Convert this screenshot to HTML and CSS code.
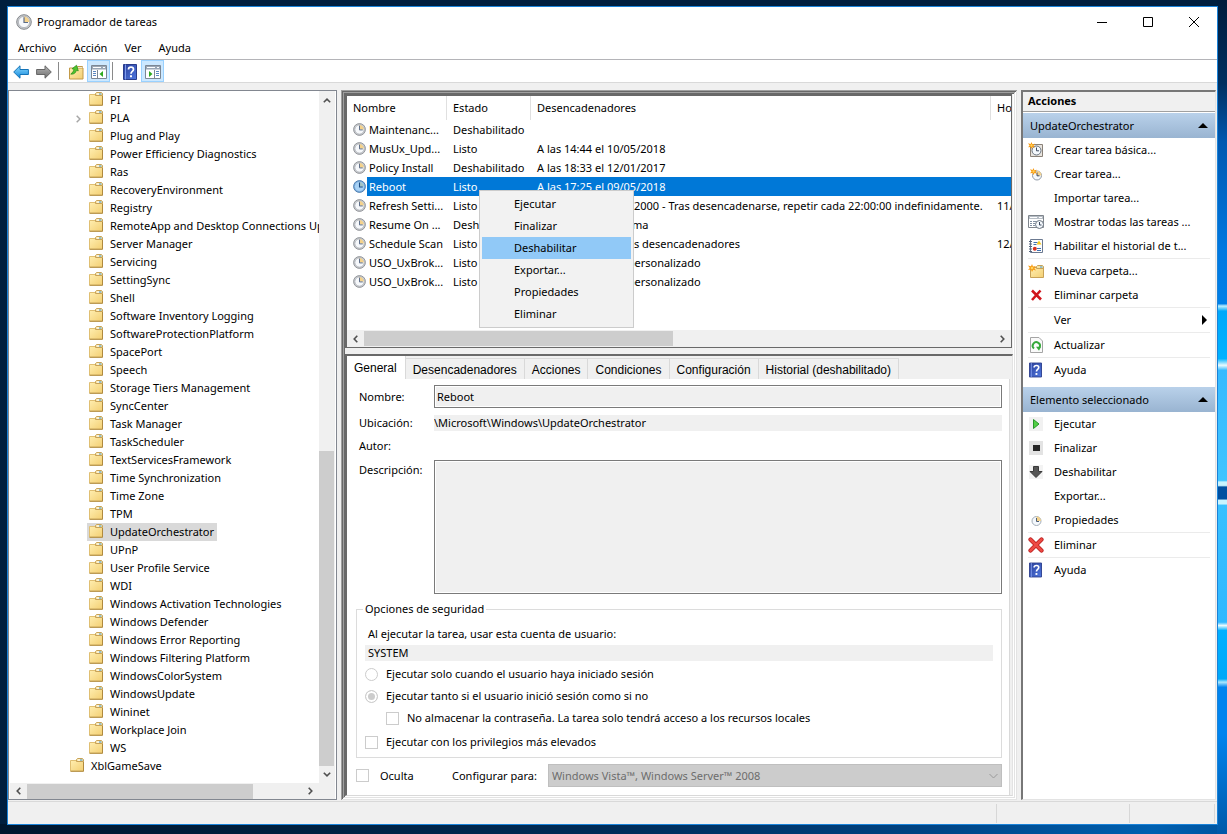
FILE: index.html
```html
<!DOCTYPE html>
<html lang="es">
<head>
<meta charset="utf-8">
<title>Programador de tareas</title>
<link rel="stylesheet" href="styles.css">
</head>
<body>
<svg class="defs" aria-hidden="true">
  <defs>
    <linearGradient id="gold" x1="0" y1="0" x2="1" y2="1"><stop offset="0" stop-color="#ffeeb0"/><stop offset="1" stop-color="#f3cf73"/></linearGradient>
    <linearGradient id="blue" x1="0" y1="0" x2="0" y2="1"><stop offset="0" stop-color="#8fdcff"/><stop offset="1" stop-color="#0f86dc"/></linearGradient>
    <linearGradient id="grey" x1="0" y1="0" x2="0" y2="1"><stop offset="0" stop-color="#b5b5b5"/><stop offset="1" stop-color="#6e6e6e"/></linearGradient>
    <linearGradient id="navy" x1="0" y1="0" x2="1" y2="1"><stop offset="0" stop-color="#2a3f9a"/><stop offset="1" stop-color="#4f78e0"/></linearGradient>
    <symbol id="folder" viewBox="0 0 14 14"><path d="M.5 2.500h13v10.500H.5z" fill="url(#gold)" stroke="#e0bf72"/><path d="M6.500 3.500v-2l1-1h5l1 1v2z" fill="#f6e3a6" stroke="#c8a257"/><path d="M8 2h2" stroke="#fff"/><path d="M10 2h2.500" stroke="#3f9be0"/><path d="M.5 13.300h13V4" fill="none" stroke="#b08a3e"/></symbol>
    <symbol id="clock" viewBox="0 0 16 16"><circle cx="8" cy="8" r="7.300" fill="#c9ccd0" stroke="#85888c"/><circle cx="8" cy="8" r="5.600" fill="#f6f8fb" stroke="#9a9ea4" stroke-width=".6"/><path d="M8 8V2.600A5.400 5.400 0 0 1 13.400 8z" fill="#f4d28c"/><path d="M8 3.200V8.500h4" fill="none" stroke="#5b6c88" stroke-width="1.200"/></symbol>
    <symbol id="clock-sel" viewBox="0 0 16 16"><circle cx="8" cy="8" r="7.300" fill="#7fb0de" stroke="#3b6ea5"/><circle cx="8" cy="8" r="5.600" fill="#a9d2f5"/><path d="M8 8V2.600A5.400 5.400 0 0 1 13.400 8z" fill="#a5c4c4"/><path d="M8 3.200V8.500h4" fill="none" stroke="#1c4a80" stroke-width="1.300"/></symbol>
    <symbol id="star" viewBox="0 0 8 8"><path d="M4 0l1 2.500L8 2 6.300 4 8 6.500 5.200 5.800 4 8 3 5.600 0 6l1.800-2L0 1.500l3 .8z" fill="#f79a12"/><circle cx="4" cy="4" r="1.300" fill="#ffd45c"/></symbol>
    <symbol id="help" viewBox="0 0 14 16"><path d="M.5.500h13v15H.5z" fill="url(#navy)" stroke="#2a3d8c"/><path d="M2.500.500v15" stroke="#7f9bec"/><path d="M5.500 5.400c0-3 5-3 5 0 0 2-2.500 2-2.500 4.300" fill="none" stroke="#fff" stroke-width="1.700"/><path d="M7 11.300h2v2H7z" fill="#fff"/></symbol>
    <symbol id="pane" viewBox="0 0 16 14"><path d="M.5.500h15v13H.5z" fill="#fff" stroke="#7c8794"/><path d="M1 1h14v3.500H1z" fill="#9aa7b6"/><path d="M2 2.500h8M12 2.500h2" stroke="#fff"/></symbol>
    <symbol id="up" viewBox="0 0 8 5"><path d="M.8 4.300L4 1.200l3.200 3.100" fill="none" stroke="#505050" stroke-width="1.600"/></symbol>
    <symbol id="down" viewBox="0 0 8 5"><path d="M.8.700L4 3.800 7.200.700" fill="none" stroke="#505050" stroke-width="1.600"/></symbol>
    <symbol id="left" viewBox="0 0 5 8"><path d="M4.300.800L1.200 4l3.100 3.200" fill="none" stroke="#505050" stroke-width="1.600"/></symbol>
    <symbol id="right" viewBox="0 0 5 8"><path d="M.7.800L3.800 4 .7 7.200" fill="none" stroke="#505050" stroke-width="1.600"/></symbol>
  </defs>
</svg>

<div class="window">
  <header class="titlebar">
    <svg class="app-icon"><use href="#clock"/></svg>
    <h1>Programador de tareas</h1>
    <div class="window-buttons">
      <button aria-label="Minimizar"><svg width="12" height="12" viewBox="0 0 12 12"><path d="M1 6.500h10" stroke="#000"/></svg></button>
      <button aria-label="Maximizar"><svg width="12" height="12" viewBox="0 0 12 12"><path d="M1.500 1.500h9v9h-9z" fill="none" stroke="#000"/></svg></button>
      <button aria-label="Cerrar"><svg width="12" height="12" viewBox="0 0 12 12"><path d="M1 1l10 10M11 1L1 11" stroke="#000"/></svg></button>
    </div>
  </header>
  <nav class="menubar">
    <button>Archivo</button><button>Acción</button><button>Ver</button><button>Ayuda</button>
  </nav>
  <div class="toolbar">
    <button aria-label="Atrás"><svg width="16" height="14" viewBox="0 0 16 14"><path d="M.7 7L7 .8v3.700h8.400v5H7v3.700z" fill="url(#blue)" stroke="#1474b8"/></svg></button>
    <button aria-label="Adelante"><svg width="16" height="14" viewBox="0 0 16 14"><path d="M15.300 7L9 .8v3.700H.6v5H9v3.700z" fill="url(#grey)" stroke="#666"/></svg></button>
    <i class="divider"></i>
    <button aria-label="Subir"><svg width="16" height="16" viewBox="0 0 16 16"><path d="M1.500 4h13.500v11H1.500z" fill="url(#gold)" stroke="#c39a48"/><path d="M9.500 3.500v-1h5v1" fill="#fff" stroke="#c39a48"/><path d="M3 11.500c3.500-.5 4.500-2.500 4.500-5h2L6.500 1.500 3 6h2c0 2-.5 3.500-2 5.500z" transform="translate(1 -.5) rotate(14 6 6)" fill="#4fc42e" stroke="#2c8f1c" stroke-width=".7"/></svg></button>
    <button class="on" aria-label="Mostrar árbol"><svg width="16" height="14"><use href="#pane"/><path d="M6.500 5v8.500" stroke="#7c8794"/><path d="M2 6.500h3M2 8.500h3M2 10.500h3" stroke="#5b88c0"/><path d="M12 6v6L8.500 9z" fill="#2eaa1e"/></svg></button>
    <i class="divider short"></i>
    <button aria-label="Ayuda"><svg width="14" height="16"><use href="#help"/></svg></button>
    <button class="on" aria-label="Mostrar acciones"><svg width="16" height="14"><use href="#pane"/><path d="M9.500 5v8.500" stroke="#7c8794"/><path d="M11 6.500h3M11 8.500h3M11 10.500h3" stroke="#5b88c0"/><path d="M4 6v6l3.500-3z" fill="#2eaa1e"/></svg></button>
  </div>

  <main class="panes">
    <section class="tree-pane">
      <ul class="tree">
        <li><svg><use href="#folder"/></svg><span>PI</span></li>
        <li class="parent"><svg><use href="#folder"/></svg><span>PLA</span><svg class="twisty" viewBox="0 0 5 8"><path d="M.7.700L4 4 .7 7.300" fill="none" stroke="#a6a6a6" stroke-width="1.500"/></svg></li>
        <li><svg><use href="#folder"/></svg><span>Plug and Play</span></li>
        <li><svg><use href="#folder"/></svg><span>Power Efficiency Diagnostics</span></li>
        <li><svg><use href="#folder"/></svg><span>Ras</span></li>
        <li><svg><use href="#folder"/></svg><span>RecoveryEnvironment</span></li>
        <li><svg><use href="#folder"/></svg><span>Registry</span></li>
        <li><svg><use href="#folder"/></svg><span>RemoteApp and Desktop Connections Update</span></li>
        <li><svg><use href="#folder"/></svg><span>Server Manager</span></li>
        <li><svg><use href="#folder"/></svg><span>Servicing</span></li>
        <li><svg><use href="#folder"/></svg><span>SettingSync</span></li>
        <li><svg><use href="#folder"/></svg><span>Shell</span></li>
        <li><svg><use href="#folder"/></svg><span>Software Inventory Logging</span></li>
        <li><svg><use href="#folder"/></svg><span>SoftwareProtectionPlatform</span></li>
        <li><svg><use href="#folder"/></svg><span>SpacePort</span></li>
        <li><svg><use href="#folder"/></svg><span>Speech</span></li>
        <li><svg><use href="#folder"/></svg><span>Storage Tiers Management</span></li>
        <li><svg><use href="#folder"/></svg><span>SyncCenter</span></li>
        <li><svg><use href="#folder"/></svg><span>Task Manager</span></li>
        <li><svg><use href="#folder"/></svg><span>TaskScheduler</span></li>
        <li><svg><use href="#folder"/></svg><span>TextServicesFramework</span></li>
        <li><svg><use href="#folder"/></svg><span>Time Synchronization</span></li>
        <li><svg><use href="#folder"/></svg><span>Time Zone</span></li>
        <li><svg><use href="#folder"/></svg><span>TPM</span></li>
        <li class="current"><svg><use href="#folder"/></svg><span>UpdateOrchestrator</span></li>
        <li><svg><use href="#folder"/></svg><span>UPnP</span></li>
        <li><svg><use href="#folder"/></svg><span>User Profile Service</span></li>
        <li><svg><use href="#folder"/></svg><span>WDI</span></li>
        <li><svg><use href="#folder"/></svg><span>Windows Activation Technologies</span></li>
        <li><svg><use href="#folder"/></svg><span>Windows Defender</span></li>
        <li><svg><use href="#folder"/></svg><span>Windows Error Reporting</span></li>
        <li><svg><use href="#folder"/></svg><span>Windows Filtering Platform</span></li>
        <li><svg><use href="#folder"/></svg><span>WindowsColorSystem</span></li>
        <li><svg><use href="#folder"/></svg><span>WindowsUpdate</span></li>
        <li><svg><use href="#folder"/></svg><span>Wininet</span></li>
        <li><svg><use href="#folder"/></svg><span>Workplace Join</span></li>
        <li><svg><use href="#folder"/></svg><span>WS</span></li>
        <li class="outer"><svg><use href="#folder"/></svg><span>XblGameSave</span></li>
      </ul>
      <div class="vscroll"><svg width="8" height="5"><use href="#up"/></svg><div class="track"><i class="thumb"></i></div><svg width="8" height="5"><use href="#down"/></svg></div>
      <div class="hscroll"><svg width="5" height="8"><use href="#left"/></svg><div class="track"><i class="thumb"></i></div><svg width="5" height="8"><use href="#right"/></svg></div>
    </section>

    <section class="center">
      <div class="task-list">
        <div class="table-clip">
          <table>
            <colgroup><col class="c-name"><col class="c-state"><col class="c-trigger"><col class="c-next"></colgroup>
            <thead><tr><th>Nombre</th><th>Estado</th><th>Desencadenadores</th><th>Hora próxima</th></tr></thead>
            <tbody>
              <tr><td><div class="name"><svg><use href="#clock"/></svg><span>Maintenanc...</span></div></td><td>Deshabilitado</td><td></td><td></td></tr>
              <tr><td><div class="name"><svg><use href="#clock"/></svg><span>MusUx_Upd...</span></div></td><td>Listo</td><td>A las 14:44 el 10/05/2018</td><td></td></tr>
              <tr><td><div class="name"><svg><use href="#clock"/></svg><span>Policy Install</span></div></td><td>Deshabilitado</td><td>A las 18:33 el 12/01/2017</td><td></td></tr>
              <tr class="selected"><td><div class="name"><svg><use href="#clock-sel"/></svg><span>Reboot</span></div></td><td>Listo</td><td>A las 17:25 el 09/05/2018</td><td></td></tr>
              <tr><td><div class="name"><svg><use href="#clock"/></svg><span>Refresh Setti...</span></div></td><td>Listo</td><td>A las 0:00 el 01/01/2000 - Tras desencadenarse, repetir cada 22:00:00 indefinidamente.</td><td>11/05/2018</td></tr>
              <tr><td><div class="name"><svg><use href="#clock"/></svg><span>Resume On ...</span></div></td><td>Deshabilitado</td><td>Al arrancar el sistema</td><td></td></tr>
              <tr><td><div class="name"><svg><use href="#clock"/></svg><span>Schedule Scan</span></div></td><td>Listo</td><td>Se definieron varios desencadenadores</td><td>12/05/2018</td></tr>
              <tr><td><div class="name"><svg><use href="#clock"/></svg><span>USO_UxBrok...</span></div></td><td>Listo</td><td>Desencadenador personalizado</td><td></td></tr>
              <tr><td><div class="name"><svg><use href="#clock"/></svg><span>USO_UxBrok...</span></div></td><td>Listo</td><td>Desencadenador personalizado</td><td></td></tr>
            </tbody>
          </table>
        </div>
        <div class="hscroll"><svg width="5" height="8"><use href="#left"/></svg><div class="track"><i class="thumb"></i></div><svg width="5" height="8"><use href="#right"/></svg></div>
        <div class="context-menu" role="menu">
          <button role="menuitem">Ejecutar</button>
          <button role="menuitem">Finalizar</button>
          <button role="menuitem" class="hover">Deshabilitar</button>
          <button role="menuitem">Exportar...</button>
          <button role="menuitem">Propiedades</button>
          <button role="menuitem">Eliminar</button>
        </div>
      </div>

      <div class="details">
        <div class="tabs" role="tablist">
          <button role="tab" class="active">General</button><button role="tab">Desencadenadores</button><button role="tab">Acciones</button><button role="tab">Condiciones</button><button role="tab">Configuración</button><button role="tab">Historial (deshabilitado)</button>
        </div>
        <form class="sheet">
          <div class="fields">
            <label for="f-name">Nombre:</label><input id="f-name" class="boxed" value="Reboot" readonly>
            <label for="f-path">Ubicación:</label><input id="f-path" class="plain" value="\Microsoft\Windows\UpdateOrchestrator" readonly>
            <span>Autor:</span><span></span>
            <label for="f-desc" class="top">Descripción:</label><textarea id="f-desc" class="boxed" readonly></textarea>
          </div>
          <fieldset>
            <legend>Opciones de seguridad</legend>
            <label class="account" for="f-user">Al ejecutar la tarea, usar esta cuenta de usuario:</label>
            <input id="f-user" class="user" value="SYSTEM" readonly>
            <label class="option"><input type="radio" name="run" disabled>Ejecutar solo cuando el usuario haya iniciado sesión</label>
            <label class="option"><input type="radio" name="run" checked disabled>Ejecutar tanto si el usuario inició sesión como si no</label>
            <label class="option nested"><input type="checkbox" disabled>No almacenar la contraseña. La tarea solo tendrá acceso a los recursos locales</label>
            <label class="option last"><input type="checkbox" disabled>Ejecutar con los privilegios más elevados</label>
          </fieldset>
          <div class="footer-row">
            <label class="hidden-task"><input type="checkbox" disabled>Oculta</label>
            <label for="f-config">Configurar para:</label>
            <div class="select-wrap">
              <select id="f-config" disabled><option>Windows Vista™, Windows Server™ 2008</option></select>
              <svg width="9" height="6" viewBox="0 0 9 6"><path d="M.5 1l4 4 4-4" fill="none" stroke="#999"/></svg>
            </div>
          </div>
        </form>
      </div>
    </section>

    <aside class="actions">
      <h2>Acciones</h2>
      <button class="group">UpdateOrchestrator<svg width="10" height="5" viewBox="0 0 10 5"><path d="M5 0l5 5H0z"/></svg></button>
      <button><svg viewBox="0 0 16 16"><path d="M2.500 2.500h12v12h-12z" fill="#e8e4de" stroke="#8a8178"/><circle cx="8.500" cy="8.500" r="4.500" fill="#f4f8fc" stroke="#69737f"/><path d="M8.500 5.500v3.300h2.500" fill="none" stroke="#3c4a60"/><use href="#star" width="7" height="7"/></svg>Crear tarea básica...</button>
      <button><svg viewBox="0 0 16 16"><circle cx="9" cy="9.500" r="4.500" fill="#f4f8fc" stroke="#8f99a5"/><path d="M9 9.500V5a4.500 4.500 0 0 1 4.500 4.500z" fill="#f4d28c"/><path d="M9 6.500v3.300h2.500" fill="none" stroke="#3c4a60"/><use href="#star" x="2" y="2" width="7" height="7"/></svg>Crear tarea...</button>
      <button><i></i>Importar tarea...</button>
      <button><svg viewBox="0 0 16 16"><path d="M.5 1.500h15v12H.5z" fill="#fff" stroke="#7f858c"/><path d="M1 2h14v3H1z" fill="#b7bec6"/><path d="M2 3.500h7M11 3.500h3" stroke="#fff"/><path d="M2 7.500h2M5 7.500h3M2 9.500h2M5 9.500h2M2 11.500h2M5 11.500h2" stroke="#8291a3"/><circle cx="11.500" cy="10.500" r="4" fill="#f4f8fc" stroke="#69737f"/><path d="M11.500 8v3h2" fill="none" stroke="#3c4a60"/></svg>Mostrar todas las tareas ...</button>
      <button><svg viewBox="0 0 16 16"><path d="M2.500 1.500h12v13h-12z" fill="#fdfdfd" stroke="#6b7990"/><path d="M1 3.500h3M1 6h3M1 8.500h3M1 11h3M1 13.500h3" stroke="#54647c"/><path d="M5.500 4.500h4M5.500 6.500h3M9 10.500h4M9 12.500h4" stroke="#3f6fae"/><path d="M11 2.500l2.500 4h-5z" fill="#f8c91c"/><circle cx="6.800" cy="10.800" r="2" fill="#d9301f"/></svg>Habilitar el historial de t...</button>
      <hr>
      <button><svg viewBox="0 0 16 16"><path d="M2.500 4.500h13v10h-13z" fill="url(#gold)" stroke="#c8a257"/><path d="M8.500 5.500v-2l1-1h5l1 1v2z" fill="#f6e3a6" stroke="#c8a257"/><path d="M12 4h2.500" stroke="#3f9be0"/><use href="#star" x="0" y="1" width="8" height="8"/></svg>Nueva carpeta...</button>
      <button><svg viewBox="0 0 16 16"><path d="M4 3.500l9 9M12.500 3.500L4 13" stroke="#d0141b" stroke-width="2.600"/></svg>Eliminar carpeta</button>
      <hr>
      <button><i></i>Ver<svg class="more" width="5" height="10" viewBox="0 0 5 10"><path d="M0 0l5 5-5 5z"/></svg></button>
      <hr>
      <button><svg viewBox="0 0 16 16"><path d="M2.500.500h8.500l3.500 3.500v11.500h-12z" fill="#fafafa" stroke="#a5a5a5"/><path d="M6 11.600a3.600 3.600 0 1 1 5.300-.800" fill="none" stroke="#35a83a" stroke-width="1.900"/><path d="M8 9.800h5l-2 4z" fill="#35a83a"/></svg>Actualizar</button>
      <hr>
      <button><svg viewBox="0 0 16 16"><use href="#help" x="1" width="13" height="16"/></svg>Ayuda</button>
      <button class="group second">Elemento seleccionado<svg width="10" height="5" viewBox="0 0 10 5"><path d="M5 0l5 5H0z"/></svg></button>
      <button><svg viewBox="0 0 16 16"><path d="M1 1h14v14H1z" fill="#f1f1f1"/><path d="M5.500 3.500L11 8l-5.500 4.500z" fill="#52cf45" stroke="#27972a"/></svg>Ejecutar</button>
      <button><svg viewBox="0 0 16 16"><path d="M1 1h14v14H1z" fill="#e3e3e3"/><path d="M5 5h7v6H5z" fill="#262626"/></svg>Finalizar</button>
      <button><svg viewBox="0 0 16 16"><path d="M1 1h14v14H1z" fill="#f3f3f3"/><path d="M5.500 2.500h5v5h3.500L8 13.500 2 7.500h3.500z" fill="#555" stroke="#3a3a3a"/></svg>Deshabilitar</button>
      <button><i></i>Exportar...</button>
      <button><svg viewBox="0 0 16 16"><circle cx="8.500" cy="9" r="4.500" fill="#f4f8fc" stroke="#a3adb8"/><path d="M8.500 9V4.500A4.500 4.500 0 0 1 13 9z" fill="#f4d28c"/><path d="M8.500 6v3.500H11" fill="none" stroke="#4a5c78"/></svg>Propiedades</button>
      <hr>
      <button><svg viewBox="0 0 16 16"><path d="M2.500 2.500l11 11M13.500 2.500l-11 11" stroke="#b81c1c" stroke-width="4.200" stroke-linecap="round"/><path d="M2.500 2.500l11 11M13.500 2.500l-11 11" stroke="#ee4a44" stroke-width="2.600" stroke-linecap="round"/></svg>Eliminar</button>
      <hr>
      <button><svg viewBox="0 0 16 16"><use href="#help" x="1" width="13" height="16"/></svg>Ayuda</button>
    </aside>
  </main>

  <footer class="statusbar"><span></span><span></span><span></span></footer>
</div>
</body>
</html>
```
FILE: styles.css
```css
* { box-sizing: border-box; }

body {
  margin: 0;
  height: 100vh;
  padding: 6px 9px 9px 7px;
  font: 11px/16px "Noto Sans", "Open Sans", sans-serif;
  color: #000;
  background:
    linear-gradient(#001c3c 0, #002f60 10%, #0058b0 17%, #0078e0 30%, #0080e8 36.4%, #bdf0ff 36.7%, #00a8fa 37.3%, #00b2ff 43%, #e8fbff 43.8%, #36baff 44.4%, #40c4ff 57.6%, #c8f4ff 57.8%, #c8f4ff 58.2%, #004fa0 58.4%, #004fa0 59.8%, #c8f4ff 60%, #c8f4ff 60.4%, #38c0ff 60.6%, #30b8ff 74.6%, #e8fbff 75%, #00b0ff 75.6%, #00a8f8 81.4%, #a8e8ff 81.8%, #0084ee 82.4%, #0084ee 88%, #0058a8 100%) right / 10px 100% no-repeat,
    linear-gradient(90deg, #00162e, #001f3d 22%, #002c58 50%, #004484 76%, #0060b0 94%, #0054a0) bottom / 100% 10px no-repeat,
    #001e3e;
}

button, input, select, textarea { font: inherit; color: inherit; }
button { margin: 0; padding: 0; border: 0; background: none; white-space: nowrap; }
input, textarea { margin: 0; outline: 0; border-radius: 0; }
.defs { position: absolute; width: 0; height: 0; }

.window {
  display: flex;
  flex-direction: column;
  height: 100%;
  border: 1px solid #1a82d8;
  background: #f0f0f0;
}

/* Title, menus and tools */
.titlebar { display: flex; align-items: center; height: 29px; padding-left: 8px; background: #fff; }
.app-icon { width: 16px; height: 16px; }
.titlebar h1 { margin: 0 0 0 5px; font-size: 11px; font-weight: 400; }
.window-buttons { display: flex; margin-left: auto; }
.window-buttons button { display: grid; place-items: center; width: 46px; height: 28px; }
.menubar { display: flex; gap: 17px; height: 24px; padding-left: 10px; background: #fff; border-bottom: 1px solid #b4b4b8; }
.toolbar { display: flex; align-items: center; height: 23px; padding-left: 1px; background: #fff; border-bottom: 1px solid #d9d9d9; }
.toolbar button { display: grid; place-items: center; width: 23px; height: 22px; padding-top: 2px; }
.toolbar .on { border: 1px solid #99d1ff; background: #cce8ff; }
.divider { width: 1px; height: 18px; margin: 0 5px 0 3px; background: #8a8a8a; }
.divider.short { margin: 0 5px 0 2px; }

/* Panes */
.panes {
  flex: 1;
  min-height: 0;
  display: grid;
  grid-template-columns: 329px minmax(0, 1fr) 195px;
  gap: 4px;
  padding: 7px 1px 1px 0;
}

.tree-pane {
  display: grid;
  grid-template: minmax(0, 1fr) 16px / minmax(0, 1fr) 16px;
  min-height: 0;
  padding: 0 1px;
  border: 1px solid #828790;
  background: #fff;
}
.tree { margin: 0; padding: 0; list-style: none; overflow: hidden; }
.tree li { position: relative; display: flex; align-items: center; height: 18px; padding-left: 79px; white-space: nowrap; }
.tree li.outer { padding-left: 60px; }
.tree svg { flex: none; width: 19px; height: 18px; padding: 1px 5px 3px 0; }
.tree span { padding: 0 3px 0 2px; line-height: 18px; }
.tree .current::before { content: ""; width: 2px; height: 18px; margin-left: -2px; background: #d9d9d9; }
.tree .current svg, .tree .current span { background: #d9d9d9; }
.tree svg.twisty { position: absolute; left: 66px; top: 6px; width: 5px; height: 8px; padding: 0; }

.vscroll { display: flex; flex-direction: column; align-items: center; padding: 7px 0 6px; background: #f0f0f0; }
.vscroll .track { flex: 1; align-self: stretch; display: flex; flex-direction: column; justify-content: flex-end; margin: 6px 1px 6px 0; }
.vscroll .thumb { height: 48%; background: #cdcdcd; }
.hscroll { display: flex; align-items: center; padding: 0 6px; background: #f0f0f0; }
.hscroll .track { flex: 1; height: 15px; margin: 0 6px; }
.hscroll .thumb { display: block; height: 100%; background: #cdcdcd; }
.tree-pane .hscroll { grid-column: 1 / 2; }
.tree-pane .hscroll .thumb { width: 82%; }
.tree-pane::after { content: ""; background: #f0f0f0; }

.center {
  display: grid;
  grid-template-rows: 254fr 441fr;
  gap: 6px;
  min-height: 0;
  padding: 4px;
  box-shadow:
    inset 1px 1px #a0a0a0, inset -1px -1px #e3e3e3,
    inset 2px 2px #696969, inset -2px -2px #fff,
    inset 3px 3px #a0a0a0, inset -3px -3px #e3e3e3,
    inset 4px 4px #696969, inset -4px -4px #fff;
}
.task-list, .details { display: flex; flex-direction: column; min-height: 0; min-width: 0; border: 2px solid #696969; }
.task-list { position: relative; border-width: 2px 1px 1px 2px; margin-right: 1px; background: #fff; }
.table-clip { flex: 1; min-height: 0; overflow: hidden; }
table { width: 784px; table-layout: fixed; border-collapse: separate; border-spacing: 0; }
.c-name { width: 100px; }
.c-state { width: 84px; }
.c-trigger { width: 460px; }
.c-next { width: 140px; }
th, td { height: 19px; padding: 0 0 0 6px; text-align: left; font-weight: 400; white-space: nowrap; overflow: hidden; }
th { height: 24px; border-right: 1px solid #e0e0e0; }
.name { display: flex; align-items: center; gap: 1px; }
.name svg { flex: none; width: 13px; height: 13px; }
.name span { flex: 1; padding-left: 2px; line-height: 19px; }
.selected { color: #fff; }
.selected td + td, .selected .name span { background: #0078d7; }
.task-list .hscroll { height: 17px; }
.task-list .hscroll .thumb { width: 49%; }

.context-menu {
  position: absolute;
  left: 132px;
  top: 94px;
  display: grid;
  width: 155px;
  padding: 2px;
  border: 1px solid #ccc;
  background: #f2f2f2;
}
.context-menu button { height: 22px; padding-left: 32px; text-align: left; }
.context-menu .hover { background: #91c9f7; }

.details { border-color: #696969 #e3e3e3 #d9d9d9 #696969; border-width: 2px 1px 1px 2px; }
.tabs { display: flex; align-items: flex-end; height: 23px; font: 12px/16px "Liberation Sans", Arial, sans-serif; }
.tabs button { height: 21px; padding: 2px 7px 0; border: 1px solid #d9d9d9; border-width: 1px 1px 0 0; }
.tabs .active { height: 23px; padding: 0 8px 0 7px; border: 0; border-right: 1px solid #d9d9d9; background: #fff; }

.sheet { flex: 1; display: flex; flex-direction: column; min-height: 0; margin-right: 2px; padding: 6px 7px 8px 9px; border-right: 1px solid #d9d9d9; background: #fff; }
.fields {
  flex: 1;
  display: grid;
  grid-template: 23px 18px 16px minmax(0, 1fr) / 75px 1fr;
  row-gap: 6px;
  align-items: center;
  padding-left: 3px;
}
.fields .top { align-self: start; padding-top: 2px; }
.boxed { width: 100%; height: 100%; padding: 0 2px; border: 1px solid #7a7a7a; background: #f0f0f0; box-shadow: inset 0 0 0 1px #fff; resize: none; }
.plain, .user { width: 100%; height: 16px; padding: 0; border: 0; background: #f0f0f0; }

fieldset { display: flex; flex-direction: column; margin: 7px 0 6px; padding: 9px 8px 4px; border: 1px solid #dcdcdc; }
legend { margin-left: -2px; padding: 0 2px; }
.account { padding-left: 3px; margin-bottom: 3px; }
.user { padding-left: 3px; margin-bottom: 2px; }
.option { display: flex; align-items: center; gap: 8px; height: 22px; }
.option.nested { padding-left: 21px; }
.option.last { margin-top: 2px; }
input[type="radio"], input[type="checkbox"] { appearance: none; flex: none; width: 13px; height: 13px; border: 1px solid #ccc; background: #fff; }
input[type="radio"] { border-radius: 50%; }
input[type="radio"]:checked { background: #ccc; box-shadow: inset 0 0 0 2px #fff; }

.footer-row { display: flex; align-items: center; height: 23px; }
.hidden-task { display: flex; align-items: center; gap: 11px; width: 96px; }
.select-wrap { position: relative; flex: 1; margin-left: 11px; }
select { display: block; width: 100%; height: 23px; padding: 0 3px; appearance: none; border: 1px solid #bfbfbf; border-radius: 0; background: #ccc; color: #6d6d6d; opacity: 1; }
.select-wrap svg { position: absolute; right: 4px; top: 9px; }

/* Actions */
.actions { min-height: 0; overflow: hidden; border: 2px solid; border-color: #777 #e3e3e3 #e3e3e3 #777; border-right-width: 1px; border-bottom-width: 1px; background: #fff; }
.actions h2 { margin: 0 0 1px; padding: 1px 5px 2px; font-size: 11px; line-height: 16px; font-weight: 700; background: #f0f0f0; border-bottom: 1px solid #a0a0a0; }
.actions button { display: flex; align-items: center; width: 100%; height: 24px; padding-left: 5px; text-align: left; }
.actions button > svg:first-child, .actions button > i { flex: none; width: 16px; height: 16px; margin-right: 10px; }
.actions .group { justify-content: space-between; height: 25px; padding: 0 7px; background: linear-gradient(#b9d1ea, #99b4d1); }
.actions .group.second { margin-top: 5px; }
.actions .group > svg:first-child { width: 10px; height: 5px; margin: 0; }
.actions .more { margin-left: auto; margin-right: 8px; }
hr { height: 1px; margin: 0 5px; border: 0; background: #ebebeb; }

.statusbar { display: flex; justify-content: flex-end; height: 23px; padding: 2px 2px 1px 0; border-top: 1px solid #d9d9d9; }
.statusbar span { width: 85px; border-right: 1px solid #d7d7d7; }
.statusbar span:nth-child(2) { width: 133px; }
.statusbar span:first-child { flex: 1; }
```
